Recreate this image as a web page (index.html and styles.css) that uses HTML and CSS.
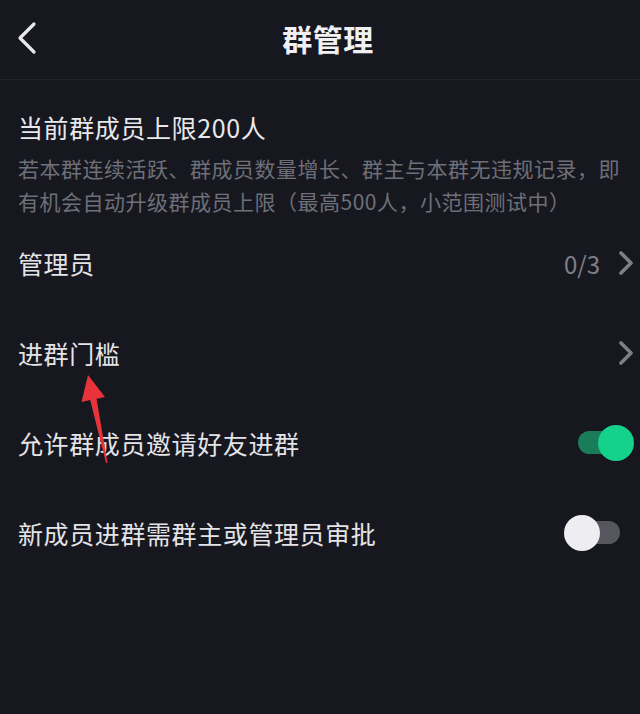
FILE: index.html
```html
<!DOCTYPE html>
<html lang="zh-CN">

<head>
    <meta charset="UTF-8">
    <meta name="viewport" content="width=device-width, initial-scale=1.0">
    <title>群管理</title>
    <link rel="stylesheet" href="styles.css">
</head>

<body>
    <div class="page">
        <div class="header">
            <svg class="back" width="22" height="34" viewBox="0 0 22 34">
                <polyline points="18,3 4,17 18,31" fill="none" stroke="#e8e8ec" stroke-width="3.2"
                    stroke-linecap="round" stroke-linejoin="round" />
            </svg>
            <div class="title">群管理</div>
        </div>

        <div class="limit">
            <div class="limit-title">当前群成员上限200人</div>
            <p class="limit-desc">若本群连续活跃、群成员数量增长、群主与本群无违规记录，即有机会自动升级群成员上限（最高500人，小范围测试中）</p>
        </div>

        <div class="row">
            <span class="row-label">管理员</span>
            <div class="row-right">
                <span class="row-value">0/3</span>
                <svg class="arrow" width="16" height="24" viewBox="0 0 16 24">
                    <polyline points="3,2 13,12 3,22" fill="none" stroke="#7e7f86" stroke-width="3.6"
                        stroke-linecap="round" stroke-linejoin="round" />
                </svg>
            </div>
        </div>

        <div class="row">
            <span class="row-label">进群门槛</span>
            <div class="row-right">
                <svg class="arrow" width="16" height="24" viewBox="0 0 16 24">
                    <polyline points="3,2 13,12 3,22" fill="none" stroke="#7e7f86" stroke-width="3.6"
                        stroke-linecap="round" stroke-linejoin="round" />
                </svg>
            </div>
        </div>

        <div class="row">
            <span class="row-label">允许群成员邀请好友进群</span>
            <div class="switch on"><span class="knob"></span></div>
        </div>

        <div class="row">
            <span class="row-label">新成员进群需群主或管理员审批</span>
            <div class="switch off"><span class="knob"></span></div>
        </div>

        <!-- annotation arrow drawn over the screenshot -->
        <svg class="pointer" width="640" height="714" viewBox="0 0 640 714">
            <polygon points="88,375 105,397 96.5,398.8 107.5,463 106,463 90.2,400 81.5,402" fill="#e8333b" />
        </svg>
    </div>
</body>

</html>
```

FILE: styles.css
```css
* {
    box-sizing: border-box;
    margin: 0;
    padding: 0;
    font-family: 'Noto Sans CJK SC', 'Noto Sans', sans-serif;
}

body {
    background-color: #17181f;
    color: #e6e6ea;
    width: 640px;
    height: 714px;
    overflow: hidden;
}

.page {
    position: relative;
    height: 714px;
}

.header {
    height: 80px;
    display: flex;
    align-items: center;
    padding: 0 0 4px 16px;
    border-bottom: 1px solid #22232b;
}

.back {
    flex: none;
}

.title {
    flex: 1;
    text-align: center;
    font-size: 30px;
    font-weight: bold;
    color: #f0f0f3;
    padding-right: 22px;
    letter-spacing: 0.5px;
}

.limit {
    padding: 30px 8px 0 18px;
}

.limit-title {
    font-size: 25px;
    line-height: 34px;
    letter-spacing: 0.6px;
    color: #e8e8ec;
}

.limit-desc {
    margin-top: 8px;
    font-size: 21px;
    line-height: 33px;
    letter-spacing: 0.5px;
    color: #6e6f78;
}

.row {
    height: 90px;
    display: flex;
    align-items: center;
    justify-content: space-between;
    padding: 0 6px 0 18px;
}

.row-label {
    font-size: 25px;
    letter-spacing: 0.6px;
    color: #e4e4e8;
}

.row-right {
    display: flex;
    align-items: center;
    gap: 18px;
}

.row-value {
    font-size: 24px;
    color: #7e7f86;
}

.switch {
    position: relative;
    width: 56px;
    height: 36px;
    margin-right: 14px;
}

.switch::before {
    content: '';
    position: absolute;
    left: 12px;
    right: 0;
    top: 6px;
    height: 23px;
    border-radius: 12px;
}

.switch .knob {
    position: absolute;
    top: 0;
    width: 36px;
    height: 36px;
    border-radius: 50%;
}

.switch.on {
    margin-right: 0;
}

.switch.on::before {
    left: 0;
    right: 16px;
    background-color: #1b7c59;
}

.switch.on .knob {
    right: 0;
    background-color: #14d18c;
}

.switch.off::before {
    background-color: #55565e;
}

.switch.off .knob {
    left: 0;
    background-color: #eeeef2;
}

.pointer {
    position: absolute;
    left: 0;
    top: 0;
    pointer-events: none;
}
```
